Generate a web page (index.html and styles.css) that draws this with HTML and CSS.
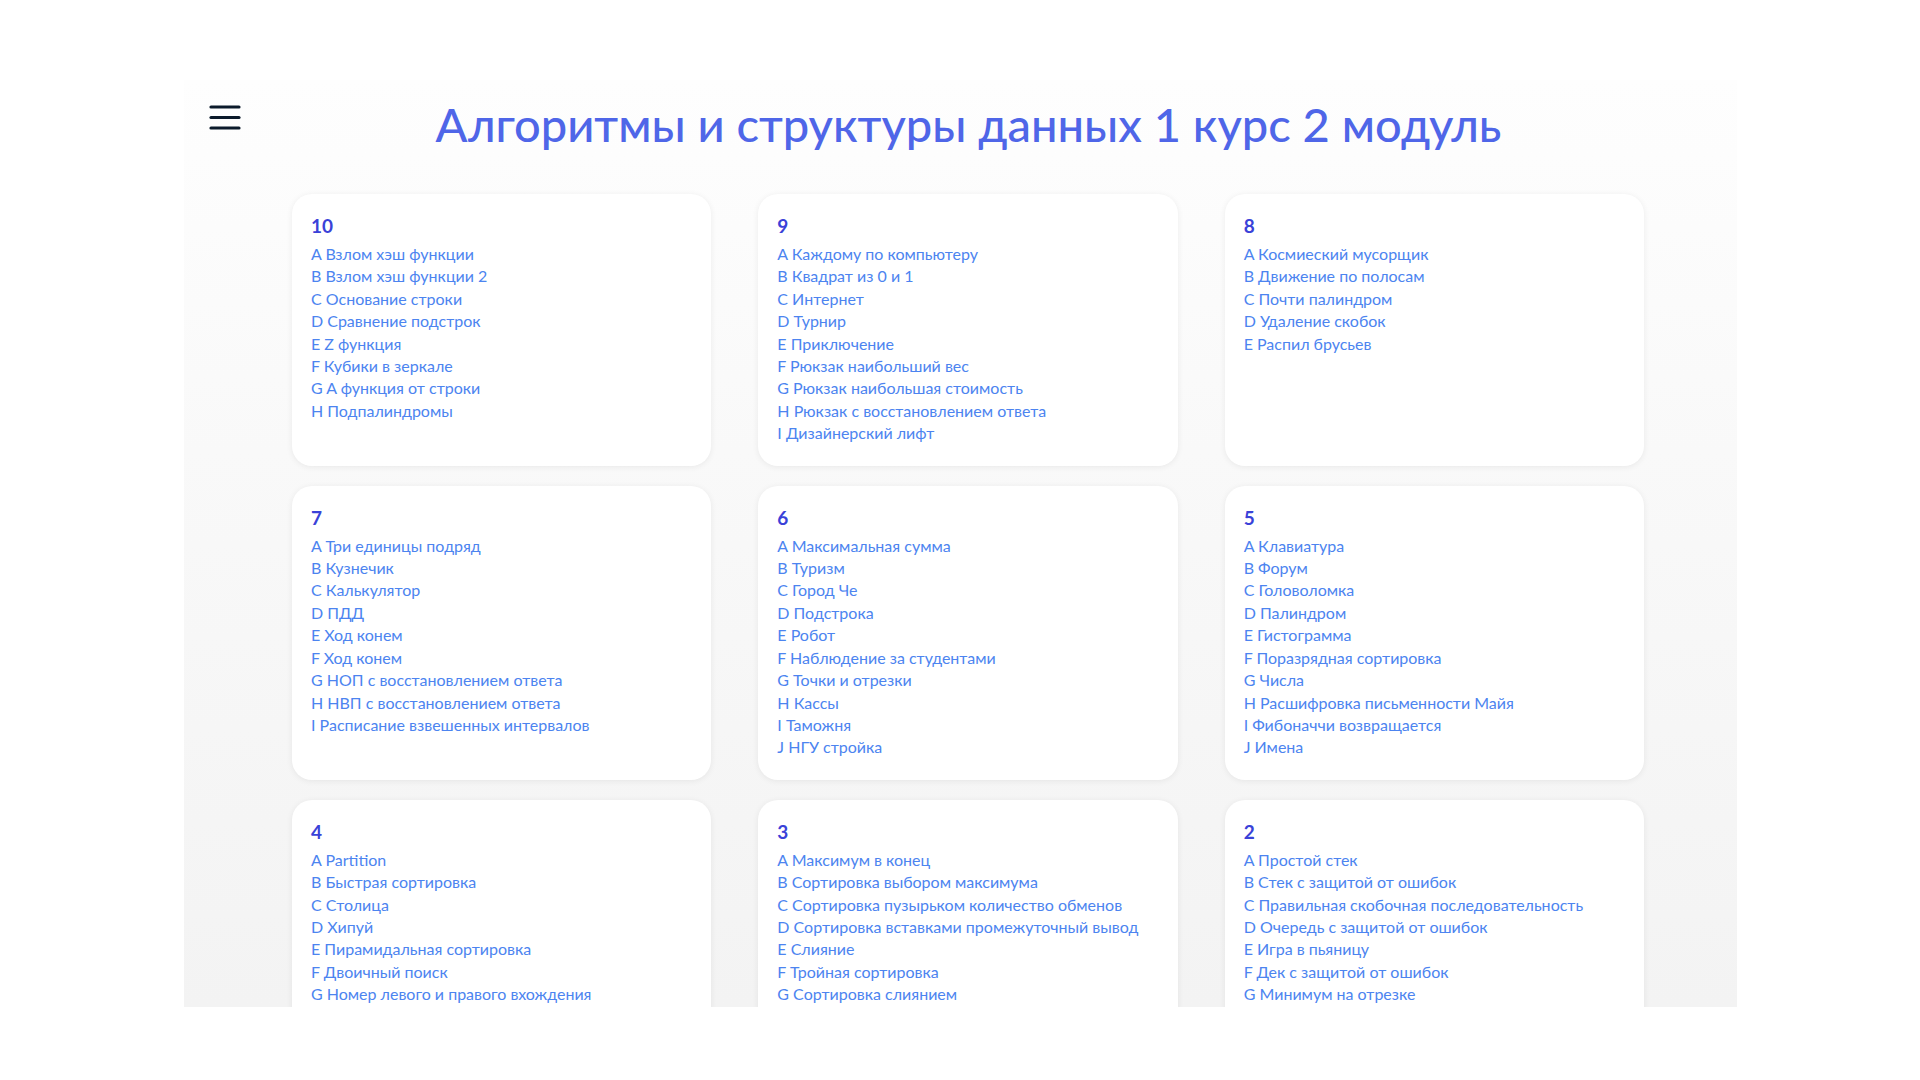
FILE: index.html
```html
<!DOCTYPE html>
<html lang="ru">
<head>
<meta charset="utf-8">
<title>Алгоритмы и структуры данных 1 курс 2 модуль</title>
<link rel="stylesheet" href="styles.css">
</head>
<body>
<div class="frame">
  <header class="header">
    <button class="burger" aria-label="Меню">
      <svg width="32" height="26" viewBox="0 0 32 26"><g stroke="#0b1a2b" stroke-width="3.2" stroke-linecap="round"><line x1="2" y1="2" x2="30" y2="2"/><line x1="2" y1="12.5" x2="30" y2="12.5"/><line x1="2" y1="23" x2="30" y2="23"/></g></svg>
    </button>
    <h1 class="title">Алгоритмы и структуры данных 1 курс 2 модуль</h1>
  </header>
  <main class="grid">
    <section class="card">
      <h2 class="num">10</h2>
      <ul class="list">
        <li>A Взлом хэш функции</li>
        <li>B Взлом хэш функции 2</li>
        <li>C Основание строки</li>
        <li>D Сравнение подстрок</li>
        <li>E Z функция</li>
        <li>F Кубики в зеркале</li>
        <li>G A функция от строки</li>
        <li>H Подпалиндромы</li>
      </ul>
    </section>
    <section class="card">
      <h2 class="num">9</h2>
      <ul class="list">
        <li>A Каждому по компьютеру</li>
        <li>B Квадрат из 0 и 1</li>
        <li>C Интернет</li>
        <li>D Турнир</li>
        <li>E Приключение</li>
        <li>F Рюкзак наибольший вес</li>
        <li>G Рюкзак наибольшая стоимость</li>
        <li>H Рюкзак с восстановлением ответа</li>
        <li>I Дизайнерский лифт</li>
      </ul>
    </section>
    <section class="card">
      <h2 class="num">8</h2>
      <ul class="list">
        <li>A Космиеский мусорщик</li>
        <li>B Движение по полосам</li>
        <li>C Почти палиндром</li>
        <li>D Удаление скобок</li>
        <li>E Распил брусьев</li>
      </ul>
    </section>
    <section class="card">
      <h2 class="num">7</h2>
      <ul class="list">
        <li>A Три единицы подряд</li>
        <li>B Кузнечик</li>
        <li>C Калькулятор</li>
        <li>D ПДД</li>
        <li>E Ход конем</li>
        <li>F Ход конем</li>
        <li>G НОП с восстановлением ответа</li>
        <li>H НВП с восстановлением ответа</li>
        <li>I Расписание взвешенных интервалов</li>
      </ul>
    </section>
    <section class="card">
      <h2 class="num">6</h2>
      <ul class="list">
        <li>A Максимальная сумма</li>
        <li>B Туризм</li>
        <li>C Город Че</li>
        <li>D Подстрока</li>
        <li>E Робот</li>
        <li>F Наблюдение за студентами</li>
        <li>G Точки и отрезки</li>
        <li>H Кассы</li>
        <li>I Таможня</li>
        <li>J НГУ стройка</li>
      </ul>
    </section>
    <section class="card">
      <h2 class="num">5</h2>
      <ul class="list">
        <li>A Клавиатура</li>
        <li>B Форум</li>
        <li>C Головоломка</li>
        <li>D Палиндром</li>
        <li>E Гистограмма</li>
        <li>F Поразрядная сортировка</li>
        <li>G Числа</li>
        <li>H Расшифровка письменности Майя</li>
        <li>I Фибоначчи возвращается</li>
        <li>J Имена</li>
      </ul>
    </section>
    <section class="card">
      <h2 class="num">4</h2>
      <ul class="list">
        <li>A Partition</li>
        <li>B Быстрая сортировка</li>
        <li>C Столица</li>
        <li>D Хипуй</li>
        <li>E Пирамидальная сортировка</li>
        <li>F Двоичный поиск</li>
        <li>G Номер левого и правого вхождения</li>
      </ul>
    </section>
    <section class="card">
      <h2 class="num">3</h2>
      <ul class="list">
        <li>A Максимум в конец</li>
        <li>B Сортировка выбором максимума</li>
        <li>C Сортировка пузырьком количество обменов</li>
        <li>D Сортировка вставками промежуточный вывод</li>
        <li>E Слияние</li>
        <li>F Тройная сортировка</li>
        <li>G Сортировка слиянием</li>
      </ul>
    </section>
    <section class="card">
      <h2 class="num">2</h2>
      <ul class="list">
        <li>A Простой стек</li>
        <li>B Стек с защитой от ошибок</li>
        <li>C Правильная скобочная последовательность</li>
        <li>D Очередь с защитой от ошибок</li>
        <li>E Игра в пьяницу</li>
        <li>F Дек с защитой от ошибок</li>
        <li>G Минимум на отрезке</li>
      </ul>
    </section>
  </main>
</div>
</body>
</html>
```
FILE: styles.css
```css
* { box-sizing: border-box; }
html, body { margin: 0; padding: 0; background: #ffffff; }
body {
  font-family: Lato, "Noto Sans", sans-serif;
  height: 1080px;
  overflow: hidden;
}
.frame {
  margin: 80px 0 0 184px;
  width: 1553px;
  height: 927px;
  overflow: hidden;
  background: linear-gradient(180deg, #fefefe 0%, #f9f9f9 40%, #f3f3f3 100%);
}
.header {
  display: flex;
  align-items: flex-start;
  padding: 14px 41px 0 26px;
}
.burger {
  flex: none;
  width: 32px;
  height: 26px;
  margin-top: 11px;
  margin-left: -1px;
  padding: 0;
  border: 0;
  background: transparent;
  display: block;
}
.burger svg { display: block; }
.title {
  flex: 1;
  margin: 0;
  text-align: center;
  font-size: 47px;
  line-height: 60px;
  font-weight: 500;
  color: #4f66e8;
  letter-spacing: 0;
}
.grid {
  display: grid;
  grid-template-columns: repeat(3, 1fr);
  column-gap: 47px;
  row-gap: 20px;
  width: 1352px;
  margin: 40px 0 0 108px;
}
.card {
  background: #ffffff;
  border-radius: 20px;
  box-shadow: 0 1px 6px rgba(0, 0, 0, 0.07);
  padding: 20px 20px 21px 19px;
}
.num {
  margin: 0 0 5px;
  font-size: 19px;
  line-height: 24px;
  font-weight: 700;
  color: #3a42d8;
}
.list {
  list-style: none;
  margin: 0;
  padding: 0;
  font-size: 16px;
  line-height: 22.4px;
  color: #4c84f0;
}
```
